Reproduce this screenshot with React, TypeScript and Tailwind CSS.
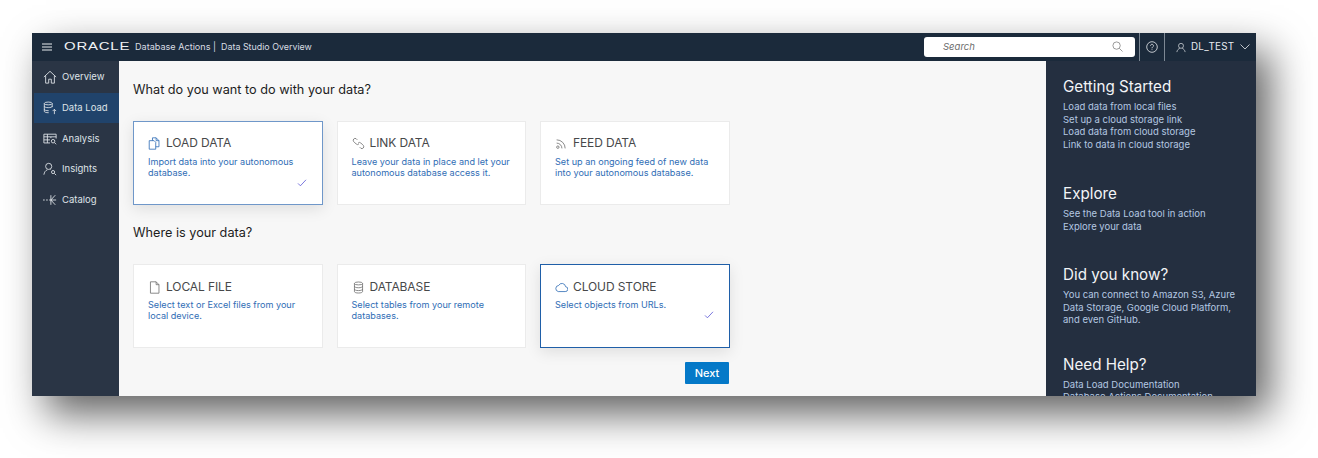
import type { ReactNode } from 'react';

const Icon = ({ children, className = 'w-[14px] h-[14px]' }: { children: ReactNode; className?: string }) => (
    <svg viewBox="0 0 16 16" fill="none" stroke="currentColor" strokeWidth="1" className={className}>
        {children}
    </svg>
);

const navItems: { label: string; active?: boolean; icon: ReactNode }[] = [
    {
        label: 'Overview',
        icon: <path d="M1 8 8 1.500 15 8M3 6.500V15h3.500v-4.500h3V15H13V6.500" />,
    },
    {
        label: 'Data Load',
        active: true,
        icon: (
            <>
                <ellipse cx="6" cy="2.800" rx="4.500" ry="1.600" />
                <path d="M1.500 2.800v9c0 1 2 1.600 5 1.600M10.500 2.800V7M1.500 6c0 1 2 1.600 4.500 1.600S10.500 7 10.500 6M1.500 9.500c0 1 2 1.600 5 1.600M13 15V9.500M11 11.500l2-2 2 2" />
            </>
        ),
    },
    {
        label: 'Analysis',
        icon: (
            <>
                <path d="M1 2.500h14v5M1 2.500v10h7M1 5.500h14M1 9h7M5 2.500v10M9 5.500v1.500" />
                <circle cx="11.500" cy="10.500" r="2" />
                <path d="m13 12 2 2" />
            </>
        ),
    },
    {
        label: 'Insights',
        icon: (
            <>
                <circle cx="6.500" cy="5" r="3.500" />
                <path d="M1 14.500c.5-3 2-5 4-5.500M8.500 8.500l.5.300" />
                <circle cx="11.500" cy="11.500" r="1.800" />
                <path d="m13 13 2 2" />
            </>
        ),
    },
    {
        label: 'Catalog',
        icon: <path d="M0 8h2M3.500 8h2M7 8h8M14 2.500 9 8l5 5.500M9 2.500v11" />,
    },
];

const Check = () => (
    <svg viewBox="0 0 12 10" fill="none" stroke="#5b57d6" strokeWidth="1" className="w-[10px] h-[8px]">
        <path d="M1 5.500 4 8.500 11 1" />
    </svg>
);

const CardIcon = ({ children, blue }: { children: ReactNode; blue?: boolean }) => (
    <span className={`flex ${blue ? 'text-[#2f6db5]' : 'text-[#6f6f6f]'}`}>
        <Icon className="w-[13px] h-[13px]">{children}</Icon>
    </span>
);

function Card({
    title,
    text,
    icon,
    selected,
    strong,
    lower,
}: {
    title: string;
    text: ReactNode;
    icon: ReactNode;
    selected?: boolean;
    strong?: boolean;
    lower?: boolean;
}) {
    return (
        <div
            className={`relative w-[189.500px] h-[84px] bg-white pl-[14px] pr-[6px] border ${lower ? 'pt-[13px]' : 'pt-[12px]'} ${
                selected
                    ? strong
                        ? 'border-[#1f5fa8] shadow-[0_4px_14px_rgba(0,0,0,0.1)]'
                        : 'border-[#6f97c9] shadow-[0_4px_14px_rgba(0,0,0,0.1)]'
                    : 'border-[#ebebeb]'
            }`}
        >
            <div className="flex items-center gap-[5px] h-[18px]">
                {icon}
                <span className="text-[12px] leading-[18px] text-[#47484a] tracking-[-0.1px]">{title}</span>
            </div>
            <p
                className={`text-[9.100px] leading-[11.300px] text-[#2f6db5] whitespace-nowrap ${
                    lower ? 'mt-[3px]' : 'mt-[4px]'
                }`}
            >
                {text}
            </p>
            {selected && (
                <span className={`absolute right-[15px] flex ${strong ? 'bottom-[28px]' : 'bottom-[17px]'}`}>
                    <Check />
                </span>
            )}
        </div>
    );
}

function HelpBlock({ title, lines, className = '' }: { title: string; lines: string[]; className?: string }) {
    return (
        <div className={className}>
            <h2 className="text-[15.200px] leading-[24px] text-[#f2f4f7] font-normal whitespace-nowrap">{title}</h2>
            <div className="mt-[2px] text-[9.500px] leading-[12.500px] text-[#b4c8e2]">
                {lines.map((l) => (
                    <div key={l} className="whitespace-nowrap">
                        {l}
                    </div>
                ))}
            </div>
        </div>
    );
}

export default function App() {
    return (
        <div className="w-[1318px] h-[458px] bg-white overflow-hidden pl-[32px] pt-[33px] font-['Inter',sans-serif]">
            <div className="w-[1224px] h-[363px] overflow-hidden flex flex-col bg-[#f7f7f7] shadow-[14px_18px_38px_rgba(0,0,0,0.62)]">
                {/* header */}
                <header className="h-[28px] shrink-0 bg-[#1b2a3b] flex items-center text-[#e8ebef]">
                    <svg viewBox="0 0 10 8" stroke="currentColor" strokeWidth="1" className="w-[10px] h-[8px] ml-[10px]">
                        <path d="M0 1h10M0 4h10M0 7h10" />
                    </svg>
                    <span className="ml-[12px] w-[65px] text-[11.500px] leading-none tracking-[0.6px] text-[#f0f2f5] scale-x-[1.300] origin-left font-['Liberation_Sans',sans-serif]">
                        ORACLE
                    </span>
                    <span className="ml-[6px] text-[9.100px] text-[#d9dde3] whitespace-nowrap">Database Actions |</span>
                    <span className="ml-[5px] text-[8.900px] text-[#d9dde3] whitespace-nowrap">
                        Data Studio Overview
                    </span>
                    <div className="ml-auto mr-px h-[20px] w-[211px] bg-white rounded-[3px] flex items-center pl-[19px] pr-[10px]">
                        <span className="text-[9.500px] italic text-[#6b6b6b]">Search</span>
                        <svg
                            viewBox="0 0 12 12"
                            fill="none"
                            stroke="#777"
                            strokeWidth="0.800"
                            className="ml-auto w-[11px] h-[11px] -translate-x-[2px] -translate-y-[1px]"
                        >
                            <circle cx="5" cy="5" r="4" />
                            <path d="m8 8 3.500 3.500" />
                        </svg>
                    </div>
                    <div className="ml-[3px] h-full w-[26px] border-x border-[#7d8894] flex items-center justify-center">
                        <svg
                            viewBox="0 0 12 12"
                            fill="none"
                            stroke="currentColor"
                            strokeWidth="0.800"
                            className="w-[12px] h-[12px]"
                        >
                            <circle cx="6" cy="6" r="5.300" />
                            <path d="M4.500 4.800c0-2 3-2 3 0 0 1.200-1.500 1.100-1.500 2.500M6 8.300v.800" />
                        </svg>
                    </div>
                    <div className="w-[91px] flex items-center pl-[11px] text-[9.800px] tracking-[0.300px]">
                        <svg
                            viewBox="0 0 12 12"
                            fill="none"
                            stroke="currentColor"
                            strokeWidth="0.800"
                            className="w-[10px] h-[11px]"
                        >
                            <circle cx="6" cy="4" r="3" />
                            <path d="M1 11.500C1.500 9 3 7.500 4.500 7M11 11.500C10.500 9 9 7.500 7.500 7" />
                        </svg>
                        <span className="ml-[5px]">DL_TEST</span>
                        <svg
                            viewBox="0 0 10 6"
                            fill="none"
                            stroke="currentColor"
                            strokeWidth="0.800"
                            className="ml-[6px] w-[10px] h-[6px]"
                        >
                            <path d="m.5.500 4.500 4.500 4.500-4.500" />
                        </svg>
                    </div>
                </header>

                <div className="flex flex-1 min-h-0">
                    {/* sidebar */}
                    <nav className="w-[87px] shrink-0 bg-[#2a3545] pt-px">
                        {navItems.map((item) => (
                            <div
                                key={item.label}
                                className={`h-[30.700px] flex items-center gap-[5px] text-[9.500px] text-[#dfe3e8] ${
                                    item.active ? 'bg-[#20436b] border-l-[2px] border-[#2a3545] pl-[9px]' : 'pl-[11px]'
                                }`}
                            >
                                <Icon>{item.icon}</Icon>
                                <span>{item.label}</span>
                            </div>
                        ))}
                    </nav>

                    {/* main */}
                    <main className="flex-1 min-w-0 pl-[14px] pt-[18px]">
                        <h1 className="text-[12.700px] leading-[22px] font-normal text-[#1d1d1d]">
                            What do you want to do with your data?
                        </h1>
                        <div className="mt-[20px] flex gap-[14px]">
                            <Card
                                selected
                                title="LOAD DATA"
                                text={
                                    <>
                                        Import data into your autonomous
                                        <br />
                                        database.
                                    </>
                                }
                                icon={
                                    <CardIcon blue>
                                        <path d="M1.500 4.500h6l2 2v8.500h-8zM5.500 4.500V1h4.500l3.500 3.500V12H9.500M10 1v3.500h3.500" />
                                    </CardIcon>
                                }
                            />
                            <Card
                                title="LINK DATA"
                                text={
                                    <>
                                        Leave your data in place and let your
                                        <br />
                                        autonomous database access it.
                                    </>
                                }
                                icon={
                                    <CardIcon>
                                        <path d="M6.500 3.500 5 2a2.400 2.400 0 0 0-3.200 3.300l3.400 3.400a2.400 2.400 0 0 0 3.300-.2M9.500 12.500 11 14a2.400 2.400 0 0 0 3.200-3.300l-3.400-3.400a2.400 2.400 0 0 0-3.300.2" />
                                    </CardIcon>
                                }
                            />
                            <Card
                                title="FEED DATA"
                                text={
                                    <>
                                        Set up an ongoing feed of new data
                                        <br />
                                        into your autonomous database.
                                    </>
                                }
                                icon={
                                    <CardIcon>
                                        <circle cx="3.500" cy="12.500" r="1.500" />
                                        <path d="M2 7.500a6.500 6.500 0 0 1 6.500 6.500M2 3.500A10.500 10.500 0 0 1 12.500 14" />
                                    </CardIcon>
                                }
                            />
                        </div>

                        <h1 className="mt-[17px] text-[12.700px] leading-[22px] font-normal text-[#1d1d1d]">
                            Where is your data?
                        </h1>
                        <div className="mt-[20px] flex gap-[14px]">
                            <Card
                                lower
                                title="LOCAL FILE"
                                text={
                                    <>
                                        Select text or Excel files from your
                                        <br />
                                        local device.
                                    </>
                                }
                                icon={
                                    <CardIcon>
                                        <path d="M3 1h7l3.500 3.500V15H3zM10 1v3.500h3.500" />
                                    </CardIcon>
                                }
                            />
                            <Card
                                lower
                                title="DATABASE"
                                text={
                                    <>
                                        Select tables from your remote
                                        <br />
                                        databases.
                                    </>
                                }
                                icon={
                                    <CardIcon>
                                        <ellipse cx="8" cy="3" rx="5" ry="1.800" />
                                        <path d="M3 3v10c0 1 2 1.800 5 1.800s5-.8 5-1.800V3M3 6.500c0 1 2 1.800 5 1.800s5-.8 5-1.800M3 10c0 1 2 1.800 5 1.800s5-.8 5-1.800" />
                                    </CardIcon>
                                }
                            />
                            <Card
                                lower
                                selected
                                strong
                                title="CLOUD STORE"
                                text="Select objects from URLs."
                                icon={
                                    <CardIcon blue>
                                        <path d="M4 13h8.500a3 3 0 0 0 .5-6 4.500 4.500 0 0 0-8.500-1.500A3.800 3.800 0 0 0 4 13z" />
                                    </CardIcon>
                                }
                            />
                        </div>

                        <div className="w-[596px] mt-[14px] flex justify-end">
                            <button className="h-[22px] w-[44px] rounded-[1px] bg-[#0579c8] text-white text-[11px] font-medium">
                                Next
                            </button>
                        </div>
                    </main>

                    {/* right panel */}
                    <aside className="w-[210px] shrink-0 bg-[#242f40] pl-[17px] pt-[14px] overflow-hidden">
                        <HelpBlock
                            title="Getting Started"
                            lines={[
                                'Load data from local files',
                                'Set up a cloud storage link',
                                'Load data from cloud storage',
                                'Link to data in cloud storage',
                            ]}
                        />
                        <HelpBlock
                            className="mt-[31px]"
                            title="Explore"
                            lines={['See the Data Load tool in action', 'Explore your data']}
                        />
                        <HelpBlock
                            className="mt-[30px]"
                            title="Did you know?"
                            lines={[
                                'You can connect to Amazon S3, Azure',
                                'Data Storage, Google Cloud Platform,',
                                'and even GitHub.',
                            ]}
                        />
                        <HelpBlock
                            className="mt-[26px]"
                            title="Need Help?"
                            lines={['Data Load Documentation', 'Database Actions Documentation']}
                        />
                    </aside>
                </div>
            </div>
        </div>
    );
}
